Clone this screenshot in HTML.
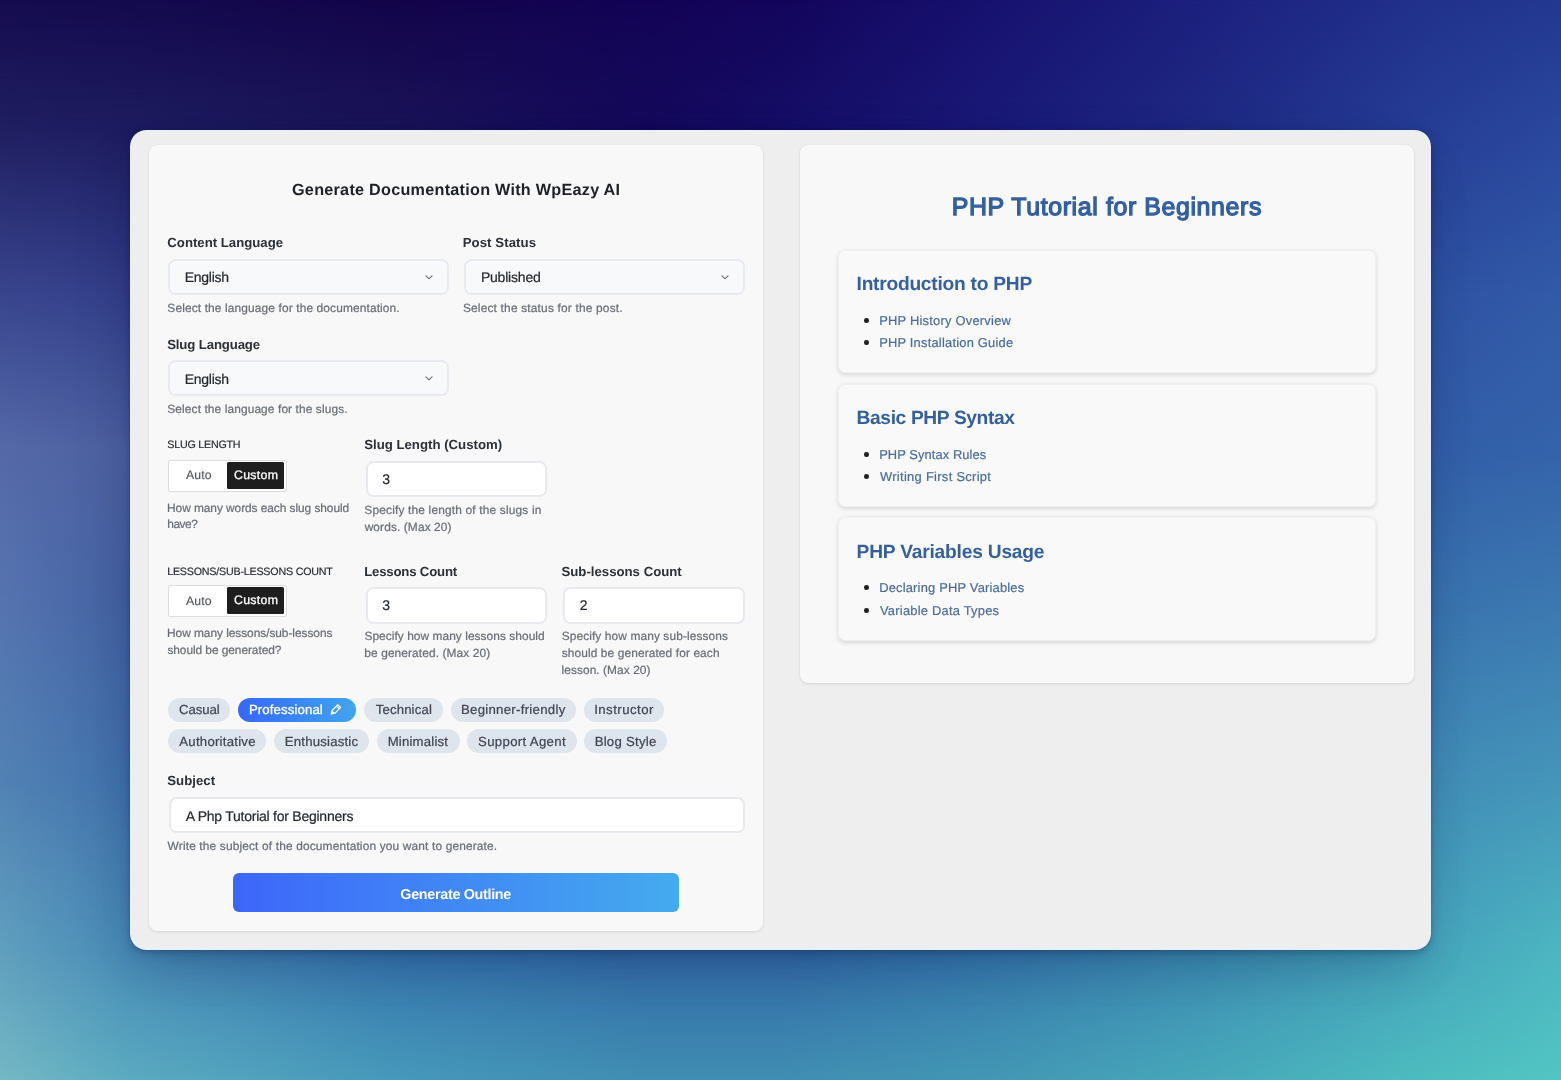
<!DOCTYPE html>
<html lang="en"><head><meta charset="utf-8"><title>Generate Documentation With WpEazy AI</title>
<style>
html,body{margin:0;padding:0}
body{width:1561px;height:1080px;position:relative;overflow:hidden;background:#2a4a90;font-family:"Liberation Sans", sans-serif;text-rendering:geometricPrecision;-webkit-font-smoothing:antialiased}
.bgl{position:absolute;left:0;top:0;width:1561px;height:1080px}
.win,.card,.sel,.inp,.tog,.togon,.tag,.btn,.sec,.dot{position:absolute;box-sizing:border-box}
.win{background:#eeeeee;border-radius:16.5px;border:2px solid rgba(230,239,252,.92);border-top-width:1px;box-shadow:0 0 1px rgba(0,5,25,.45),0 3px 6px -1px rgba(0,15,40,.18),0 22px 46px -10px rgba(5,20,70,.17),-8px 22px 70px -14px rgba(0,15,40,.10),0 4px 14px -2px rgba(0,10,45,.13)}
.card{background:#f8f8f8;border-radius:8px;box-shadow:0 1px 3px rgba(0,0,0,.10),0 0 1px rgba(0,0,0,.08)}
.sel{background:#f8f9fb;border:2px solid #e8eaef;border-radius:7.5px}
.inp{background:#ffffff;border:2px solid #e7e9ee;border-radius:7.5px}
.tog{background:#fff;border:1px solid #dcdcde;border-radius:2px}
.togon{background:#1e1e1e;border-radius:1.5px}
.tag{background:#dfe5ed;border-radius:13px}
.tag.on{background:linear-gradient(90deg,#3667f9 0%,#40a6ee 100%)}
.btn{background:linear-gradient(90deg,#3d66fb 0%,#44abee 100%);border-radius:6px}
.sec{background:#f9f9f9;border-radius:7px;border:1px solid #f0f0f0;box-shadow:0 1.5px 4px rgba(0,0,0,.13)}
.dot{width:4.6px;height:4.6px;border-radius:50%;background:#222}
.txt{position:absolute;left:0;top:0;width:1561px;height:1080px;will-change:transform}
.t{position:absolute;line-height:40px;height:40px;white-space:pre}
</style></head>
<body>
<div class="bgl" style="background:linear-gradient(to right, rgb(21,12,79) 0.000%, rgb(20,10,78) 8.328%, rgb(19,4,74) 24.984%, rgb(19,3,86) 41.640%, rgb(19,5,92) 49.968%, rgb(23,18,112) 64.061%, rgb(28,32,126) 76.874%, rgb(33,50,140) 91.672%, rgb(35,56,144) 100.000%);"></div>
<div class="bgl" style="background:linear-gradient(to right, rgb(32,31,98) 0.000%, rgb(30,28,96) 8.328%, rgb(26,20,88) 24.984%, rgb(20,9,91) 41.640%, rgb(21,14,102) 49.968%, rgb(26,26,120) 64.061%, rgb(30,41,131) 76.874%, rgb(38,62,150) 91.672%, rgb(42,72,158) 100.000%);-webkit-mask-image:linear-gradient(to bottom, transparent 0px, #000 130px);mask-image:linear-gradient(to bottom, transparent 0px, #000 130px);"></div>
<div class="bgl" style="background:linear-gradient(to right, rgb(58,71,143) 0.000%, rgb(52,65,140) 8.328%, rgb(51,69,145) 24.984%, rgb(50,72,149) 41.640%, rgb(50,74,151) 49.968%, rgb(49,77,155) 64.061%, rgb(48,80,159) 76.874%, rgb(47,83,163) 91.672%, rgb(50,91,168) 100.000%);-webkit-mask-image:linear-gradient(to bottom, transparent 130px, #000 300px);mask-image:linear-gradient(to bottom, transparent 130px, #000 300px);"></div>
<div class="bgl" style="background:linear-gradient(to right, rgb(85,105,168) 0.000%, rgb(76,96,160) 8.328%, rgb(71,96,162) 24.984%, rgb(66,95,163) 41.640%, rgb(63,95,164) 49.968%, rgb(59,95,165) 64.061%, rgb(55,94,167) 76.874%, rgb(50,94,168) 91.672%, rgb(53,99,171) 100.000%);-webkit-mask-image:linear-gradient(to bottom, transparent 300px, #000 450px);mask-image:linear-gradient(to bottom, transparent 300px, #000 450px);"></div>
<div class="bgl" style="background:linear-gradient(to right, rgb(86,116,176) 0.000%, rgb(67,97,162) 8.328%, rgb(65,100,164) 24.984%, rgb(63,104,167) 41.640%, rgb(62,105,168) 49.968%, rgb(60,108,170) 64.061%, rgb(59,111,172) 76.874%, rgb(57,114,174) 91.672%, rgb(60,120,177) 100.000%);-webkit-mask-image:linear-gradient(to bottom, transparent 450px, #000 600px);mask-image:linear-gradient(to bottom, transparent 450px, #000 600px);"></div>
<div class="bgl" style="background:linear-gradient(to right, rgb(82,130,180) 0.000%, rgb(65,113,172) 8.328%, rgb(65,119,174) 24.984%, rgb(65,124,176) 41.640%, rgb(65,127,177) 49.968%, rgb(65,132,179) 64.061%, rgb(65,136,181) 76.874%, rgb(65,141,183) 91.672%, rgb(69,149,186) 100.000%);-webkit-mask-image:linear-gradient(to bottom, transparent 600px, #000 780px);mask-image:linear-gradient(to bottom, transparent 600px, #000 780px);"></div>
<div class="bgl" style="background:linear-gradient(to right, rgb(96,159,190) 0.000%, rgb(72,139,183) 8.328%, rgb(54,117,174) 24.984%, rgb(50,106,167) 41.640%, rgb(50,106,167) 49.968%, rgb(54,121,174) 64.061%, rgb(61,140,179) 76.874%, rgb(70,165,188) 91.672%, rgb(76,182,193) 100.000%);-webkit-mask-image:linear-gradient(to bottom, transparent 780px, #000 950px);mask-image:linear-gradient(to bottom, transparent 780px, #000 950px);"></div>
<div class="bgl" style="background:linear-gradient(to right, rgb(116,184,196) 0.000%, rgb(90,170,192) 8.328%, rgb(70,153,186) 24.984%, rgb(64,142,178) 41.640%, rgb(64,142,178) 49.968%, rgb(67,152,180) 64.061%, rgb(70,167,185) 76.874%, rgb(77,189,191) 91.672%, rgb(82,197,195) 100.000%);-webkit-mask-image:linear-gradient(to bottom, transparent 950px, #000 1080px);mask-image:linear-gradient(to bottom, transparent 950px, #000 1080px);"></div>
<div class="win" style="left:130px;top:130px;width:1301.00px;height:819.60px;"></div>
<div class="card" style="left:148.5px;top:145px;width:614.50px;height:786.20px;"></div>
<div class="card" style="left:800px;top:145px;width:614.00px;height:538.00px;"></div>
<div class="sel" style="left:168.2px;top:258.5px;width:280.80px;height:36.50px;"><span style="position:absolute;right:13.6px;top:14.2px;line-height:0"><svg class="chev" viewBox="0 0 10 6" width="8" height="4.8"><path d="M1.2 1.2 L5 4.8 L8.8 1.2" fill="none" stroke="#6a6e76" stroke-width="1.4" stroke-linecap="round" stroke-linejoin="round"/></svg></span></div>
<div class="sel" style="left:464.2px;top:258.5px;width:280.80px;height:36.50px;"><span style="position:absolute;right:13.6px;top:14.2px;line-height:0"><svg class="chev" viewBox="0 0 10 6" width="8" height="4.8"><path d="M1.2 1.2 L5 4.8 L8.8 1.2" fill="none" stroke="#6a6e76" stroke-width="1.4" stroke-linecap="round" stroke-linejoin="round"/></svg></span></div>
<div class="sel" style="left:168.2px;top:359.9px;width:280.80px;height:36.50px;"><span style="position:absolute;right:13.6px;top:14.2px;line-height:0"><svg class="chev" viewBox="0 0 10 6" width="8" height="4.8"><path d="M1.2 1.2 L5 4.8 L8.8 1.2" fill="none" stroke="#6a6e76" stroke-width="1.4" stroke-linecap="round" stroke-linejoin="round"/></svg></span></div>
<div class="inp" style="left:365.9px;top:460.7px;width:181.20px;height:36.40px;"></div>
<div class="inp" style="left:365.9px;top:587.4px;width:181.20px;height:36.40px;"></div>
<div class="inp" style="left:563.2px;top:587.4px;width:181.50px;height:36.40px;"></div>
<div class="inp" style="left:168.5px;top:797.0px;width:576.00px;height:36.40px;"></div>
<div class="tog" style="left:167.9px;top:459.8px;width:119.10px;height:31.90px;"><div class="togon" style="left:58.2px;top:1.0px;width:57.00px;height:27.40px;"></div></div>
<div class="tog" style="left:167.9px;top:585.0px;width:119.10px;height:31.90px;"><div class="togon" style="left:58.2px;top:1.0px;width:57.00px;height:27.40px;"></div></div>
<div class="tag" style="left:167.6px;top:697.5px;width:62.70px;height:24.30px;"></div>
<div class="tag" style="left:363.9px;top:697.5px;width:79.10px;height:24.30px;"></div>
<div class="tag" style="left:450.5px;top:697.5px;width:125.50px;height:24.30px;"></div>
<div class="tag" style="left:583.5px;top:697.5px;width:80.90px;height:24.30px;"></div>
<div class="tag" style="left:167.6px;top:729.2px;width:98.20px;height:24.30px;"></div>
<div class="tag" style="left:273.5px;top:729.2px;width:95.50px;height:24.30px;"></div>
<div class="tag" style="left:377.0px;top:729.2px;width:82.80px;height:24.30px;"></div>
<div class="tag" style="left:466.7px;top:729.2px;width:110.30px;height:24.30px;"></div>
<div class="tag" style="left:583.9px;top:729.2px;width:82.80px;height:24.30px;"></div>
<div class="tag on" style="left:238.1px;top:697.5px;width:118.10px;height:24.30px;"><span style="position:absolute;left:90.8px;top:4.7px;line-height:0"><svg viewBox="0 0 24 24" width="14.3" height="14.3"><path d="M14.7 4.7 L19.3 9.3 L9.8 18.8 L3.6 20.4 L5.2 14.2 Z M12.6 6.8 L17.2 11.4" fill="none" stroke="#fff" stroke-width="2.1" stroke-linejoin="round" stroke-linecap="round"/><path d="M5.2 14.2 L9.8 18.8 L3.6 20.4 Z" fill="#fff"/></svg></span></div>
<div class="btn" style="left:232.7px;top:873.4px;width:446.10px;height:39.10px;"></div>
<div class="sec" style="left:838px;top:249.6px;width:538.40px;height:123.80px;"></div>
<i class="dot" style="left:864.4px;top:318.1px"></i>
<i class="dot" style="left:864.4px;top:340.3px"></i>
<div class="sec" style="left:838px;top:383.5px;width:538.40px;height:123.80px;"></div>
<i class="dot" style="left:864.4px;top:452.1px"></i>
<i class="dot" style="left:864.4px;top:474.4px"></i>
<div class="sec" style="left:838px;top:517.4px;width:538.40px;height:123.80px;"></div>
<i class="dot" style="left:864.4px;top:585.2px"></i>
<i class="dot" style="left:864.4px;top:608.1px"></i>
<div class="txt">
<span class="t" style="left:292.02px;top:170px;font-size:16.2px;color:#1e2226;font-weight:700;letter-spacing:0.263px;">Generate Documentation With WpEazy AI</span>
<span class="t" style="left:167.30px;top:223px;font-size:13.2px;color:#2b2f36;font-weight:700;">Content Language</span>
<span class="t" style="left:462.67px;top:223px;font-size:13.2px;color:#2b2f36;font-weight:700;letter-spacing:0.082px;">Post Status</span>
<span class="t" style="left:184.79px;top:257px;font-size:14.0px;color:#23282d;letter-spacing:-0.290px;-webkit-text-stroke:0.2px #23282d;">English</span>
<span class="t" style="left:480.89px;top:257px;font-size:14.0px;color:#23282d;letter-spacing:-0.202px;-webkit-text-stroke:0.2px #23282d;">Published</span>
<span class="t" style="left:167.33px;top:288px;font-size:11.9px;color:#686d76;letter-spacing:0.136px;-webkit-text-stroke:0.22px #686d76;">Select the language for the documentation.</span>
<span class="t" style="left:462.93px;top:288px;font-size:11.9px;color:#686d76;letter-spacing:0.188px;-webkit-text-stroke:0.22px #686d76;">Select the status for the post.</span>
<span class="t" style="left:167.18px;top:325px;font-size:13.2px;color:#2b2f36;font-weight:700;letter-spacing:-0.130px;">Slug Language</span>
<span class="t" style="left:184.79px;top:359px;font-size:14.0px;color:#23282d;letter-spacing:-0.290px;-webkit-text-stroke:0.2px #23282d;">English</span>
<span class="t" style="left:167.33px;top:389px;font-size:11.9px;color:#686d76;letter-spacing:0.111px;-webkit-text-stroke:0.22px #686d76;">Select the language for the slugs.</span>
<span class="t" style="left:167.27px;top:425px;font-size:10.7px;color:#2a2d31;letter-spacing:-0.217px;-webkit-text-stroke:0.2px #2a2d31;">SLUG LENGTH</span>
<span class="t" style="left:186.01px;top:455px;font-size:12.3px;color:#4d5157;letter-spacing:0.139px;-webkit-text-stroke:0.12px #4d5157;">Auto</span>
<span class="t" style="left:233.97px;top:455px;font-size:12.3px;color:#ffffff;letter-spacing:0.312px;-webkit-text-stroke:0.3px #ffffff;">Custom</span>
<span class="t" style="left:167.09px;top:488px;font-size:11.9px;color:#686d76;letter-spacing:-0.055px;-webkit-text-stroke:0.22px #686d76;">How many words each slug should</span>
<span class="t" style="left:167.21px;top:504px;font-size:11.9px;color:#686d76;letter-spacing:-0.423px;-webkit-text-stroke:0.22px #686d76;">have?</span>
<span class="t" style="left:364.18px;top:425px;font-size:13.2px;color:#2b2f36;font-weight:700;letter-spacing:0.011px;">Slug Length (Custom)</span>
<span class="t" style="left:382.13px;top:459px;font-size:14.0px;color:#23282d;-webkit-text-stroke:0.2px #23282d;">3</span>
<span class="t" style="left:364.33px;top:490px;font-size:11.9px;color:#686d76;letter-spacing:0.177px;-webkit-text-stroke:0.22px #686d76;">Specify the length of the slugs in</span>
<span class="t" style="left:364.64px;top:507px;font-size:11.9px;color:#686d76;letter-spacing:0.120px;-webkit-text-stroke:0.22px #686d76;">words. (Max 20)</span>
<span class="t" style="left:167.15px;top:552px;font-size:10.7px;color:#2a2d31;letter-spacing:-0.198px;-webkit-text-stroke:0.2px #2a2d31;">LESSONS/SUB-LESSONS COUNT</span>
<span class="t" style="left:186.01px;top:581px;font-size:12.3px;color:#4d5157;letter-spacing:0.139px;-webkit-text-stroke:0.12px #4d5157;">Auto</span>
<span class="t" style="left:233.97px;top:580px;font-size:12.3px;color:#ffffff;letter-spacing:0.312px;-webkit-text-stroke:0.3px #ffffff;">Custom</span>
<span class="t" style="left:167.09px;top:613px;font-size:11.9px;color:#686d76;letter-spacing:-0.045px;-webkit-text-stroke:0.22px #686d76;">How many lessons/sub-lessons</span>
<span class="t" style="left:167.39px;top:630px;font-size:11.9px;color:#686d76;letter-spacing:-0.053px;-webkit-text-stroke:0.22px #686d76;">should be generated?</span>
<span class="t" style="left:364.17px;top:552px;font-size:13.2px;color:#2b2f36;font-weight:700;letter-spacing:-0.182px;">Lessons Count</span>
<span class="t" style="left:561.48px;top:552px;font-size:13.2px;color:#2b2f36;font-weight:700;letter-spacing:0.007px;">Sub-lessons Count</span>
<span class="t" style="left:382.13px;top:585px;font-size:14.0px;color:#23282d;-webkit-text-stroke:0.2px #23282d;">3</span>
<span class="t" style="left:579.78px;top:585px;font-size:14.0px;color:#23282d;-webkit-text-stroke:0.2px #23282d;">2</span>
<span class="t" style="left:364.43px;top:616px;font-size:11.9px;color:#686d76;letter-spacing:0.059px;-webkit-text-stroke:0.22px #686d76;">Specify how many lessons should</span>
<span class="t" style="left:364.33px;top:633px;font-size:11.9px;color:#686d76;letter-spacing:0.103px;-webkit-text-stroke:0.22px #686d76;">be generated. (Max 20)</span>
<span class="t" style="left:561.63px;top:616px;font-size:11.9px;color:#686d76;letter-spacing:0.115px;-webkit-text-stroke:0.22px #686d76;">Specify how many sub-lessons</span>
<span class="t" style="left:561.69px;top:633px;font-size:11.9px;color:#686d76;letter-spacing:0.116px;-webkit-text-stroke:0.22px #686d76;">should be generated for each</span>
<span class="t" style="left:561.53px;top:650px;font-size:11.9px;color:#686d76;letter-spacing:0.071px;-webkit-text-stroke:0.22px #686d76;">lesson. (Max 20)</span>
<span class="t" style="left:178.90px;top:690px;font-size:13.2px;color:#3d4652;letter-spacing:-0.038px;-webkit-text-stroke:0.22px #3d4652;">Casual</span>
<span class="t" style="left:248.89px;top:690px;font-size:13.2px;color:#ffffff;letter-spacing:0.122px;-webkit-text-stroke:0.3px #ffffff;">Professional</span>
<span class="t" style="left:375.65px;top:690px;font-size:13.2px;color:#3d4652;letter-spacing:0.158px;-webkit-text-stroke:0.22px #3d4652;">Technical</span>
<span class="t" style="left:460.95px;top:690px;font-size:13.2px;color:#3d4652;letter-spacing:0.290px;-webkit-text-stroke:0.22px #3d4652;">Beginner-friendly</span>
<span class="t" style="left:594.15px;top:690px;font-size:13.2px;color:#3d4652;letter-spacing:0.485px;-webkit-text-stroke:0.22px #3d4652;">Instructor</span>
<span class="t" style="left:179.34px;top:722px;font-size:13.2px;color:#3d4652;letter-spacing:0.236px;-webkit-text-stroke:0.22px #3d4652;">Authoritative</span>
<span class="t" style="left:284.85px;top:722px;font-size:13.2px;color:#3d4652;letter-spacing:0.192px;-webkit-text-stroke:0.22px #3d4652;">Enthusiastic</span>
<span class="t" style="left:387.65px;top:722px;font-size:13.2px;color:#3d4652;letter-spacing:0.195px;-webkit-text-stroke:0.22px #3d4652;">Minimalist</span>
<span class="t" style="left:478.02px;top:722px;font-size:13.2px;color:#3d4652;letter-spacing:0.332px;-webkit-text-stroke:0.22px #3d4652;">Support Agent</span>
<span class="t" style="left:594.65px;top:722px;font-size:13.2px;color:#3d4652;letter-spacing:0.248px;-webkit-text-stroke:0.22px #3d4652;">Blog Style</span>
<span class="t" style="left:167.18px;top:761px;font-size:13.2px;color:#2b2f36;font-weight:700;letter-spacing:0.057px;">Subject</span>
<span class="t" style="left:185.75px;top:796px;font-size:14.0px;color:#23282d;letter-spacing:-0.248px;-webkit-text-stroke:0.2px #23282d;">A Php Tutorial for Beginners</span>
<span class="t" style="left:167.62px;top:826px;font-size:11.9px;color:#686d76;letter-spacing:0.155px;-webkit-text-stroke:0.22px #686d76;">Write the subject of the documentation you want to generate.</span>
<span class="t" style="left:400.34px;top:875px;font-size:14.4px;color:#ffffff;font-weight:700;letter-spacing:-0.332px;">Generate Outline</span>
<span class="t" style="left:951.69px;top:187px;font-size:24.9px;color:#34609f;letter-spacing:0.617px;-webkit-text-stroke:1.3px #34609f;">PHP Tutorial for Beginners</span>
<span class="t" style="left:856.55px;top:265px;font-size:19.2px;color:#34609f;font-weight:700;letter-spacing:-0.249px;">Introduction to PHP</span>
<span class="t" style="left:879.14px;top:301px;font-size:12.9px;color:#4a6c9d;letter-spacing:0.235px;-webkit-text-stroke:0.2px #4a6c9d;">PHP History Overview</span>
<span class="t" style="left:879.14px;top:323px;font-size:12.9px;color:#4a6c9d;letter-spacing:0.213px;-webkit-text-stroke:0.2px #4a6c9d;">PHP Installation Guide</span>
<span class="t" style="left:856.55px;top:399px;font-size:19.2px;color:#34609f;font-weight:700;letter-spacing:-0.364px;">Basic PHP Syntax</span>
<span class="t" style="left:879.14px;top:435px;font-size:12.9px;color:#4a6c9d;letter-spacing:0.085px;-webkit-text-stroke:0.2px #4a6c9d;">PHP Syntax Rules</span>
<span class="t" style="left:880.00px;top:457px;font-size:12.9px;color:#4a6c9d;letter-spacing:0.308px;-webkit-text-stroke:0.2px #4a6c9d;">Writing First Script</span>
<span class="t" style="left:856.55px;top:533px;font-size:19.2px;color:#34609f;font-weight:700;letter-spacing:-0.204px;">PHP Variables Usage</span>
<span class="t" style="left:879.15px;top:568px;font-size:12.9px;color:#4a6c9d;letter-spacing:0.198px;-webkit-text-stroke:0.2px #4a6c9d;">Declaring PHP Variables</span>
<span class="t" style="left:880.00px;top:591px;font-size:12.9px;color:#4a6c9d;letter-spacing:0.230px;-webkit-text-stroke:0.2px #4a6c9d;">Variable Data Types</span>
</div>
</body></html>
